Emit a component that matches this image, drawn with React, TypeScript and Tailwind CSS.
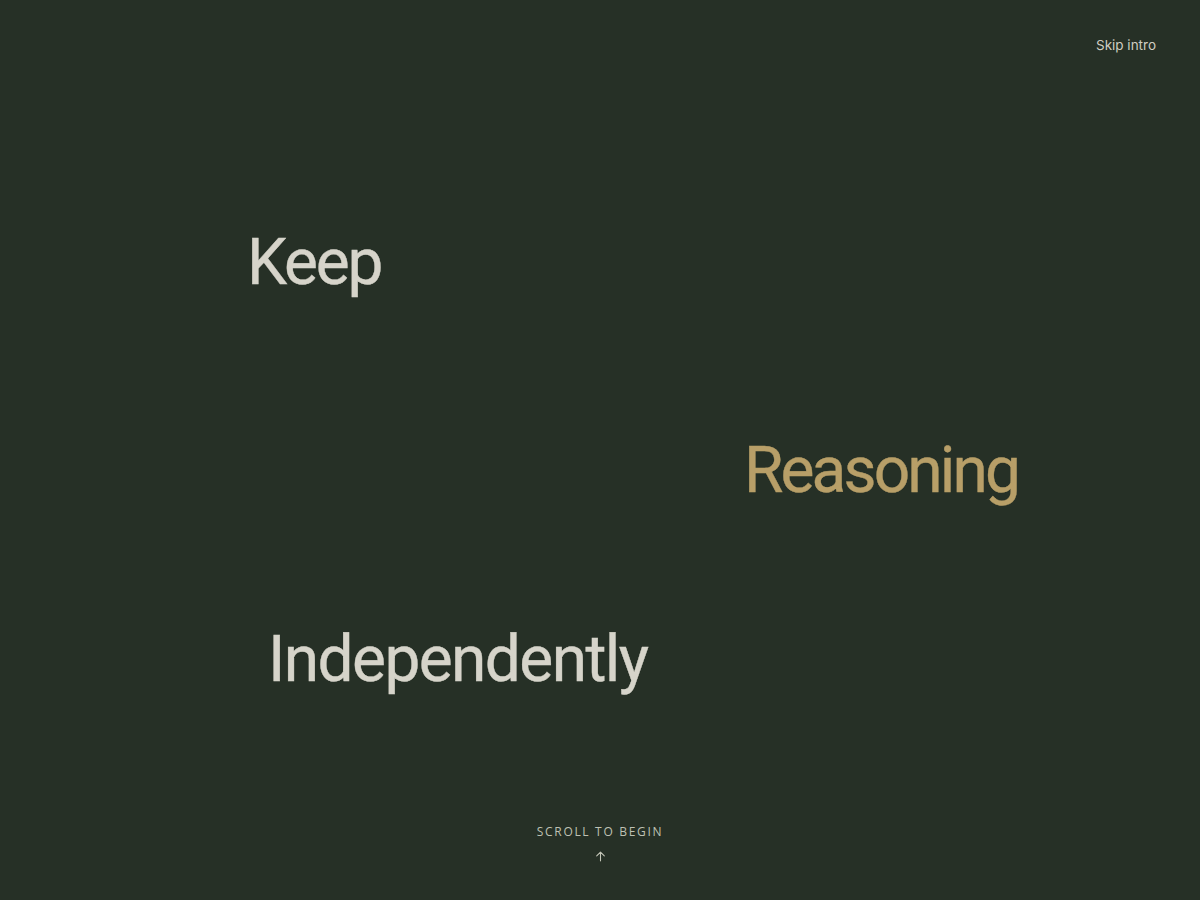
import React from "react";

const words = [
  {
    text: "Keep",
    className: "pl-[247px] pt-[231px] text-[#d6d4ca] tracking-[-0.035em]",
  },
  {
    text: "Reasoning",
    className: "pl-[744px] pt-[144px] text-[#b89f68] tracking-[-0.045em]",
  },
  {
    text: "Independently",
    className: "pl-[268px] pt-[125px] text-[#d6d4ca] tracking-[-0.025em]",
  },
];

const App: React.FC = () => {
  return (
    <div className="relative h-[900px] w-full overflow-hidden bg-[#263026] font-['Roboto',sans-serif]">
      <header className="absolute right-11 top-[33px]">
        <button
          type="button"
          className="font-['Inter',sans-serif] text-[13.5px] text-[#cfcdc2] hover:text-white transition-colors duration-200"
        >
          Skip intro
        </button>
      </header>

      <main className="flex flex-col">
        {words.map((word) => (
          <div
            key={word.text}
            className={`${word.className} text-[64px] font-normal leading-[64px] whitespace-nowrap [-webkit-text-stroke:0.4px_currentColor]`}
          >
            {word.text}
          </div>
        ))}
      </main>

      <footer className="absolute bottom-[37px] left-0 right-0 flex flex-col items-center gap-[9px]">
        <span className="font-['Open_Sans',sans-serif] text-[12px] tracking-[0.14em] text-[#bec1b3]">
          SCROLL TO BEGIN
        </span>
        <svg
          className="w-[13px] h-[13px] text-[#c4c6b8]"
          fill="none"
          stroke="currentColor"
          viewBox="0 0 24 24"
        >
          <path
            strokeLinecap="round"
            strokeLinejoin="round"
            strokeWidth={2}
            d="M12 20V4m-7 7l7-7 7 7"
          />
        </svg>
      </footer>
    </div>
  );
};

export default App;
